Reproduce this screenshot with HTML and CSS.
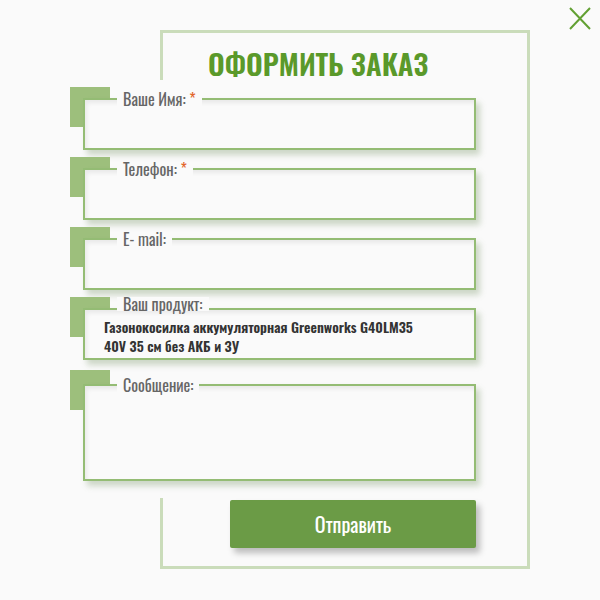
FILE: index.html
```html
<!DOCTYPE html>
<html lang="ru">
<head>
<meta charset="utf-8">
<title>Оформить заказ</title>
<link rel="stylesheet" href="styles.css">
</head>
<body>
<div class="page">
  <button class="close" type="button" aria-label="Закрыть">
    <svg viewBox="0 0 28 28" width="28" height="28"><path d="M4 4 L24 25 M24 4 L4 25" stroke="#62a033" stroke-width="2" fill="none"/></svg>
  </button>
  <div class="card">
    <h1 class="title">ОФОРМИТЬ ЗАКАЗ</h1>
    <form class="form">
      <div class="field">
        <div class="box">
          <span class="legend">Ваше Имя: <span class="req">*</span></span>
          <input class="input" type="text">
        </div>
      </div>
      <div class="field">
        <div class="box">
          <span class="legend">Телефон: <span class="req">*</span></span>
          <input class="input" type="tel">
        </div>
      </div>
      <div class="field">
        <div class="box">
          <span class="legend">E- mail:</span>
          <input class="input" type="email">
        </div>
      </div>
      <div class="field">
        <div class="box">
          <span class="legend legend-high">Ваш продукт:</span>
          <div class="product">Газонокосилка аккумуляторная Greenworks G40LM35<br>40V 35 см без АКБ и ЗУ</div>
        </div>
      </div>
      <div class="field field-msg">
        <div class="box box-msg">
          <span class="legend">Сообщение:</span>
          <textarea class="textarea"></textarea>
        </div>
      </div>
    </form>
    <div class="actions">
      <button class="submit" type="button">Отправить</button>
    </div>
  </div>
</div>
</body>
</html>
```
FILE: styles.css
```css
html, body {
  margin: 0;
  padding: 0;
  background: #fafafa;
}
body {
  font-family: Oswald, "Roboto Condensed", sans-serif;
}
.page {
  position: relative;
  width: 600px;
  height: 600px;
  overflow: hidden;
}
.close {
  position: absolute;
  left: 566px;
  top: 4px;
  width: 28px;
  height: 28px;
  padding: 0;
  border: 0;
  background: none;
}
.close svg {
  display: block;
}
.card {
  margin: 30px 0 0 160px;
  width: 370px;
  box-sizing: border-box;
  border: 3px solid #cadcba;
}
.title {
  margin: 0;
  height: 47px;
  box-sizing: border-box;
  padding: 12px 0 0 45px;
  line-height: 35px;
  font-size: 29px;
  font-weight: 600;
  color: #5a992a;
  white-space: nowrap;
}
.form {
  margin: 0 0 0 -93px;
  width: 414px;
  background: #fafafa;
  padding: 7px 0 17px;
}
.field {
  position: relative;
  padding: 11px 0 0 13px;
}
.field + .field {
  margin-top: 7px;
}
.field::before {
  content: "";
  position: absolute;
  left: 0;
  top: 0;
  width: 40px;
  height: 40px;
  background: #9dbf7c;
}
.field-msg {
  padding-top: 14px;
}
.field + .field-msg {
  margin-top: 10px;
}
.box {
  position: relative;
  width: 393px;
  height: 52px;
  box-sizing: border-box;
  border: 2px solid #94bc74;
  background: #fafafa;
  box-shadow: 4px 5px 6px rgba(110, 140, 90, 0.32), inset 2px 3px 4px rgba(0, 0, 0, 0.07);
}
.box-msg {
  height: 97px;
}
.legend {
  position: absolute;
  left: 32px;
  top: -8px;
  padding: 0 6px;
  background: #fafafa;
  font-size: 16px;
  line-height: 14px;
  color: #666;
  white-space: nowrap;
}
.legend-high {
  top: -13px;
}
.req {
  color: #e2652a;
}
.input, .textarea {
  display: block;
  box-sizing: border-box;
  width: 100%;
  height: 100%;
  border: 0;
  outline: 0;
  background: transparent;
  padding: 10px 19px;
  font: inherit;
  resize: none;
}
.product {
  padding: 7px 0 0 19px;
  font-size: 14px;
  line-height: 19px;
  font-weight: 600;
  color: #333;
  white-space: nowrap;
}
.actions {
  padding: 2px 0 18px 67px;
}
.submit {
  display: block;
  width: 246px;
  height: 48px;
  margin: 0;
  padding: 0;
  border: 0;
  border-radius: 2px;
  background: #6b9b46;
  color: #fff;
  font-family: Oswald, "Roboto Condensed", sans-serif;
  font-size: 20px;
  font-weight: 400;
  box-shadow: 4px 5px 6px rgba(0, 0, 0, 0.25);
}
```
